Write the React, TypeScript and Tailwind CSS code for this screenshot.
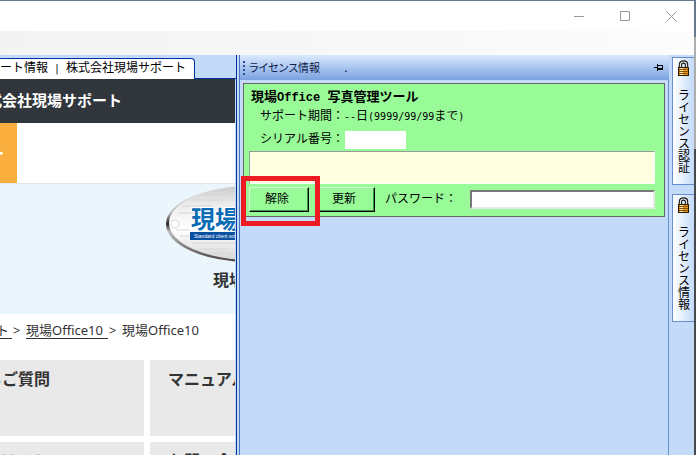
import type { ReactNode } from "react";

const gothic = "font-['Liberation_Mono','Noto_Sans_CJK_JP',monospace]";
const meiryo = "font-['Noto_Sans','Noto_Sans_CJK_JP',sans-serif]";

// Half-width latin runs are half as wide as the kanji around them
function Half({ children }: { children: ReactNode }) {
  return <span className="font-['DejaVu_Sans_Mono',monospace] text-[10px] whitespace-pre">{children}</span>;
}

function LockIcon() {
  return (
    <svg width="13" height="17" viewBox="0 0 13 17" className="shrink-0" aria-hidden="true">
      <path d="M3.5 8V4.5Q3.5 2 6.5 2T9.5 4.5V8" fill="none" stroke="#1c1c1c" strokeWidth="3.4" />
      <path d="M3.5 8V4.5Q3.5 2 6.5 2T9.5 4.5V8" fill="none" stroke="#e4e4e4" strokeWidth="1.2" />
      <rect x="1.5" y="7.5" width="10" height="8" fill="#d98a1e" stroke="#2a1a00" />
      <path d="M2 9.5h9M2 11.5h9M2 13.5h9" stroke="#8a5000" strokeWidth="1" />
      <path d="M2 8.5h9M2 10.5h9M2 12.5h9M2 14.5h9" stroke="#e89a20" strokeWidth="1" />
      <path d="M3 8.5h3M3 10.5h3M3 12.5h3M3 14.5h3" stroke="#ffe7ad" strokeWidth="1" />
    </svg>
  );
}

function PinIcon() {
  return (
    <svg width="10" height="9" viewBox="0 0 10 9" shapeRendering="crispEdges" aria-hidden="true">
      <path d="M0 4h3v1H0zM3 1h1v7H3zM4 2h5v5H4z" fill="#000" />
      <path d="M4 3h4v2H4z" fill="#a9c6f0" />
    </svg>
  );
}

function ProductLogo() {
  return (
    <svg width="69" height="80" viewBox="0 0 69 80" className="shrink-0" aria-hidden="true">
      <defs>
        <linearGradient id="plate" x1="0" y1="0" x2="0" y2="1">
          <stop offset="0" stopColor="#c9cacb" />
          <stop offset="0.25" stopColor="#ececec" />
          <stop offset="0.6" stopColor="#ffffff" />
          <stop offset="1" stopColor="#d5d5d6" />
        </linearGradient>
        <linearGradient id="rim" x1="0" y1="0" x2="0" y2="1">
          <stop offset="0" stopColor="#e8eaeb" />
          <stop offset="0.35" stopColor="#b9b9b9" />
          <stop offset="0.5" stopColor="#2c2222" />
          <stop offset="0.6" stopColor="#bdbdbd" />
          <stop offset="1" stopColor="#4b4040" />
        </linearGradient>
      </defs>
      <ellipse cx="84" cy="38" rx="84" ry="38" fill="url(#rim)" />
      <ellipse cx="86" cy="37" rx="83" ry="37" fill="url(#plate)" />
      <path
        d="M24 14h34M16 20h30M36 9h33M12 27h50M10 44h14M14 50h30M26 57h43M34 63h26M44 67h25"
        stroke="#d6d7d8"
        strokeWidth="1"
        fill="none"
      />
      <circle cx="9" cy="38" r="4" fill="#fff" stroke="#dcdcdc" strokeWidth="1" />
      <text
        x="25"
        y="42"
        fontSize="24"
        fontWeight="700"
        fill="#0a6cb5"
        stroke="#fff"
        strokeWidth="2"
        paintOrder="stroke"
        fontFamily="'Noto Sans CJK JP', sans-serif"
      >
        現場
      </text>
      <rect x="24" y="46" width="50" height="8" fill="#0b4fa0" />
      <text x="28" y="52" fontSize="5" fill="#fff" fontFamily="'Liberation Sans', sans-serif">
        Standard client software
      </text>
    </svg>
  );
}

function TitleBar() {
  return (
    <header className="flex h-[30px] shrink-0 items-center justify-end bg-white text-[#999]">
      <button aria-label="最小化" className="flex w-[46px] justify-center">
        <svg width="11" height="11" viewBox="0 0 11 11">
          <path d="M0 5.5h10" stroke="currentColor" />
        </svg>
      </button>
      <button aria-label="最大化" className="flex w-[46px] justify-center">
        <svg width="11" height="11" viewBox="0 0 11 11">
          <path d="M.5.5h9v9h-9z" fill="none" stroke="currentColor" />
        </svg>
      </button>
      <button aria-label="閉じる" className="flex w-[46px] justify-center">
        <svg width="11" height="11" viewBox="0 0 11 11">
          <path d="M.5.5l10 10M10.5.5l-10 10" stroke="currentColor" />
        </svg>
      </button>
    </header>
  );
}

function Card({ children }: { children: ReactNode }) {
  return <section className="h-[76px] overflow-hidden bg-[#e9e9e9] pt-[7px] whitespace-nowrap">{children}</section>;
}

function SitePane() {
  return (
    <div className="flex w-[237px] shrink-0 flex-col border-r border-[#003399] bg-[#c4daf9]">
      <div className="flex h-6 shrink-0 items-end">
        <div
          className={`${gothic} h-[21px] w-[195px] overflow-hidden rounded-tr border-t border-r border-[#003399] bg-white text-xs leading-5 whitespace-nowrap text-black`}
        >
          ート情報<Half> | </Half>株式会社現場サポート
        </div>
        <div className="h-px flex-1 bg-[#003399]" />
      </div>
      <div className={`${meiryo} mr-px min-h-0 flex-1 overflow-hidden bg-white text-[#333]`}>
        <div className="h-11 bg-[#30363b] text-[15px] leading-[42px] font-bold whitespace-nowrap text-white">
          <p className="-ml-[13px]">式会社現場サポート</p>
        </div>
        <div className="flex h-[61px] border-b border-[#e3e6e8]">
          <div className="w-[17px] overflow-hidden bg-[#f9ae3d] pt-[18px] text-[15px] font-bold text-white">
            <p className="-ml-2.5">ト</p>
          </div>
        </div>
        <div className="flex h-[130px] flex-col items-end overflow-hidden bg-[#eaf6fb] pt-0.5">
          <ProductLogo />
          <div className="w-[22px] pt-0.5 text-base leading-6 font-bold whitespace-nowrap">現場</div>
        </div>
        <nav className="flex h-[46px] pt-2 text-[13px] leading-4 whitespace-nowrap">
          <a href="#support" className="-ml-1 h-[17px] w-4 border-b border-[#333]">ト</a>
          <span className="w-3.5 pl-px">&gt;</span>
          <a href="#office10" className="h-[17px] w-[82px] border-b border-[#333]">現場Office10</a>
          <span className="w-3.5 pl-px">&gt;</span>
          <span>現場Office10</span>
        </nav>
        <div className="grid grid-cols-[144px_1fr] gap-1.5 text-base leading-6 font-bold">
          <Card>
            <p className="-ml-[14px]">るご質問</p>
          </Card>
          <Card>
            <p className="pl-[18px]">マニュアル</p>
          </Card>
          <Card>
            <p>リスト</p>
          </Card>
          <Card>
            <p className="pl-[18px]">お問い合わせ</p>
          </Card>
        </div>
      </div>
    </div>
  );
}

const classicButton =
  "h-[25px] border border-t-[#d8ffd8] border-l-[#d8ffd8] border-r-black border-b-black bg-[#98fb98] pr-1 text-xs shadow-[inset_-1px_-1px_0_#3c963c]";

function LicensePanel() {
  return (
    <section className="flex min-w-0 flex-1 flex-col">
      <div className="flex h-[25px] shrink-0 items-center bg-linear-to-b from-[#dceafd] via-[#a9c6f0] to-[#7aa2df] pr-[5px] pl-[3px] text-[#10204a]">
        <div className="mr-1 grid gap-0.5">
          <i className="size-0.5 bg-[#2b4f99]" />
          <i className="size-0.5 bg-[#2b4f99]" />
          <i className="size-0.5 bg-[#2b4f99]" />
          <i className="size-0.5 bg-[#2b4f99]" />
        </div>
        <h1 className="font-['Noto_Sans_CJK_JP',sans-serif] text-[11px] [font-feature-settings:'palt']">
          ライセンス情報
        </h1>
        <span className="ml-6 text-xs">.</span>
        <button aria-label="自動的に隠す" className="ml-auto">
          <PinIcon />
        </button>
      </div>
      <div className="flex-1 border-r border-[#6a8fd0] pt-[3px] pr-[3px] pl-[3px]">
        <div className={`${gothic} border border-[#666] bg-[#98fb98] px-[5px] pt-[5px] pb-1 text-xs text-black`}>
          <h2 className="pl-0.5 text-[13px] leading-[18px] font-bold">
            現場<span className="text-xs">Office </span>写真管理ツール
          </h2>
          <p className="pl-[11px] leading-5">
            サポート期間：<Half>--</Half>日<Half>(9999/99/99</Half>まで<Half>)</Half>
          </p>
          <div className="mt-px flex h-[23px] items-center pl-[11px]">
            <label htmlFor="serial" className="w-[85px]">
              シリアル番号：
            </label>
            <input id="serial" readOnly className="h-[18px] w-[61px] bg-white px-1" />
          </div>
          <div className="mr-1 h-[33px] border border-t-[#999] border-r-white border-b-white border-l-[#999] bg-[#ffffe1]" />
          <div className="mt-[3px] flex items-center">
            <div className="relative">
              <button className={`${classicButton} w-[60px]`}>解除</button>
              <div className="pointer-events-none absolute -top-[11px] -right-[11px] -bottom-[14px] -left-2 border-5 border-[#ed1c24]" />
            </div>
            <button className={`${classicButton} ml-2 w-[58px]`}>更新</button>
            <label htmlFor="password" className="ml-2.5 w-[85px]">
              パスワード：
            </label>
            <input
              id="password"
              type="password"
              className="h-[19px] min-w-0 flex-1 border-2 border-t-[#777] border-r-[#e8e8e8] border-b-[#e8e8e8] border-l-[#777] bg-white px-1"
            />
            <span className="w-1" />
          </div>
        </div>
      </div>
    </section>
  );
}

function SideTab({ label }: { label: string }) {
  return (
    <button className="flex h-32 flex-col items-center gap-3 border border-r-0 border-[#6a8fd0] bg-linear-to-r from-white to-[#c4daf9] pt-0.5 font-['Noto_Sans_CJK_JP',sans-serif] text-xs leading-4 text-black">
      <LockIcon />
      <span className="[writing-mode:vertical-rl]">{label}</span>
    </button>
  );
}

export default function App() {
  return (
    <div className="flex h-screen overflow-hidden bg-[#68788c] pt-px">
      <div className="flex min-w-0 flex-1 flex-col">
        <TitleBar />
        <div className="h-6 shrink-0 bg-linear-to-r from-[#f3f3f3] to-[#fcfcfc]" />
        <main className="flex min-h-0 flex-1 bg-[#c4daf9]">
          <SitePane />
          <div className="w-[3px] shrink-0 border-r border-[#4a74bd]" />
          <LicensePanel />
          <aside className="flex w-[25px] shrink-0 flex-col gap-[9px] pt-0.5 pl-[3px]">
            <SideTab label="ライセンス認証" />
            <SideTab label="ライセンス情報" />
          </aside>
        </main>
      </div>
      <div className="flex w-0.5 flex-col">
        <div className="h-9" />
        <div className="h-28 bg-[#adadad]" />
        <div className="flex-1 bg-[#48494c]" />
      </div>
    </div>
  );
}
